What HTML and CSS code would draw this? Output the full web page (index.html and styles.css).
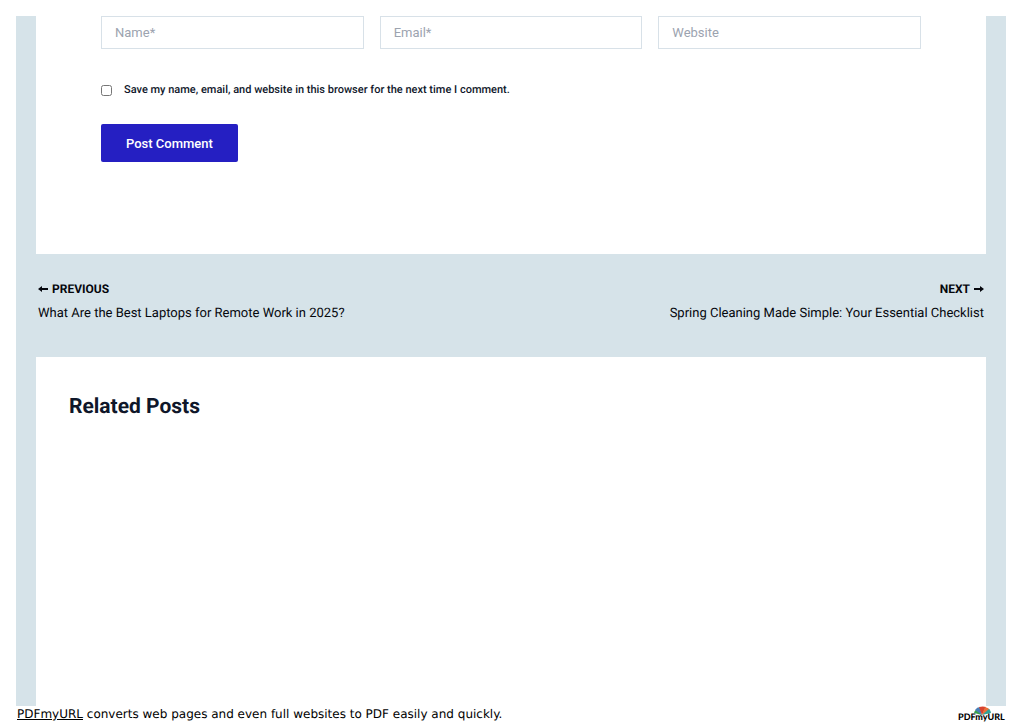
FILE: index.html
```
<!DOCTYPE html>
<html lang="en">
<head>
    <meta charset="UTF-8">
    <meta name="viewport" content="width=device-width, initial-scale=1.0">
    <title>Related Posts</title>
    <link rel="stylesheet" href="styles.css">
</head>
<body>
    <main class="site-content">
        <section class="card comments">
            <form class="comment-form">
                <div class="field-row">
                    <input type="text" name="author" placeholder="Name*" aria-label="Name">
                    <input type="email" name="email" placeholder="Email*" aria-label="Email">
                    <input type="url" name="url" placeholder="Website" aria-label="Website">
                </div>
                <div class="consent">
                    <input type="checkbox" id="save-info">
                    <label for="save-info">Save my name, email, and website in this browser for the next time I comment.</label>
                </div>
                <button type="submit" class="submit">Post Comment</button>
            </form>
        </section>

        <nav class="post-navigation">
            <a href="#" class="nav-previous">
                <span class="nav-label">
                    <svg class="arrow" viewBox="0 0 10 8"><path d="M0 4 L4 1 V3 H10 V5 H4 V7 Z"/></svg>
                    PREVIOUS
                </span>
                <span class="nav-title">What Are the Best Laptops for Remote Work in 2025?</span>
            </a>
            <a href="#" class="nav-next">
                <span class="nav-label">
                    NEXT
                    <svg class="arrow" viewBox="0 0 10 8"><path d="M10 4 L6 1 V3 H0 V5 H6 V7 Z"/></svg>
                </span>
                <span class="nav-title">Spring Cleaning Made Simple: Your Essential Checklist</span>
            </a>
        </nav>

        <section class="card related">
            <h2>Related Posts</h2>
        </section>
    </main>

    <footer class="pdf-footer">
        <p><a href="#">PDFmyURL</a> converts web pages and even full websites to PDF easily and quickly.</p>
        <svg class="logo" viewBox="0 0 48 17" role="img" aria-label="PDFmyURL">
            <path fill="#3aa24a" d="M24 9 L16 7 Q16 5 19 3 Z"/>
            <path fill="#4a7fb8" d="M24 9 L17 4 Q19 1 22 1 Z"/>
            <path fill="#d8432f" d="M24 9 L21 1 Q25 0 28 1 Z"/>
            <path fill="#e9703a" d="M24 9 L27 1 Q31 2 32 4 Z"/>
            <path fill="#2fa39a" d="M24 9 L31 3 Q33 5 33 7 Z"/>
            <text x="0" y="14">PDFmyURL</text>
        </svg>
    </footer>
</body>
</html>
```
FILE: styles.css
```
* {
    box-sizing: border-box;
}

body {
    display: flex;
    flex-direction: column;
    min-height: 100vh;
    margin: 0;
    padding: 16px 17px 0 16px;
    background: #fff;
    color: #0f172a;
    font-family: Roboto, sans-serif;
    font-size: 13px;
    text-rendering: geometricPrecision;
}

a {
    color: inherit;
}

.site-content {
    display: flex;
    flex: 1;
    flex-direction: column;
    padding: 0 20px;
    background: #d6e3e9;
}

.card {
    background: #fff;
}

.comments {
    padding: 0 65px 92px;
}

.field-row {
    display: grid;
    grid-template-columns: repeat(3, 1fr);
    gap: 16px;
}

.field-row input {
    width: 100%;
    height: 33px;
    padding: 0 13px;
    border: 1px solid #d8e1e8;
    border-radius: 0;
    background: #fff;
    color: #0f172a;
    font: inherit;
}

.field-row input::placeholder {
    color: #9ca3af;
}

.consent {
    display: flex;
    align-items: center;
    gap: 12px;
    margin: 32px 0 25px;
    color: #0f172a;
    font-size: 11px;
    font-weight: 500;
    line-height: 18px;
}

.consent input {
    width: 11px;
    height: 11px;
    margin: 0;
}

.submit {
    display: block;
    height: 38px;
    padding: 0 25px;
    border: 0;
    border-radius: 2px;
    background: #251fc2;
    color: #fff;
    font: inherit;
    font-weight: 500;
    cursor: pointer;
}

.post-navigation {
    display: flex;
    justify-content: space-between;
    padding: 25px 2px 28px;
    color: #05070d;
}

.post-navigation a {
    display: flex;
    flex-direction: column;
    text-decoration: none;
}

.nav-label {
    display: flex;
    align-items: center;
    gap: 4px;
    font-size: 12px;
    font-weight: 700;
    line-height: 20px;
}

.nav-next .nav-label {
    justify-content: flex-end;
}

.arrow {
    width: 10px;
    height: 8px;
    fill: currentColor;
}

.nav-title {
    line-height: 30px;
}

.related {
    flex: 1;
    padding: 33px;
}

.related h2 {
    margin: 0;
    font-size: 21px;
    font-weight: 700;
    line-height: 34px;
}

.pdf-footer {
    display: flex;
    align-items: flex-start;
    justify-content: space-between;
    height: 17px;
    color: #000;
    font-family: "DejaVu Sans", sans-serif;
    font-size: 12px;
}

.pdf-footer p {
    margin: 0 1px;
    line-height: 16px;
}

.logo {
    width: 48px;
    height: 17px;
}

.logo text {
    font-family: Lato, sans-serif;
    font-size: 9px;
    font-weight: 900;
}
```
